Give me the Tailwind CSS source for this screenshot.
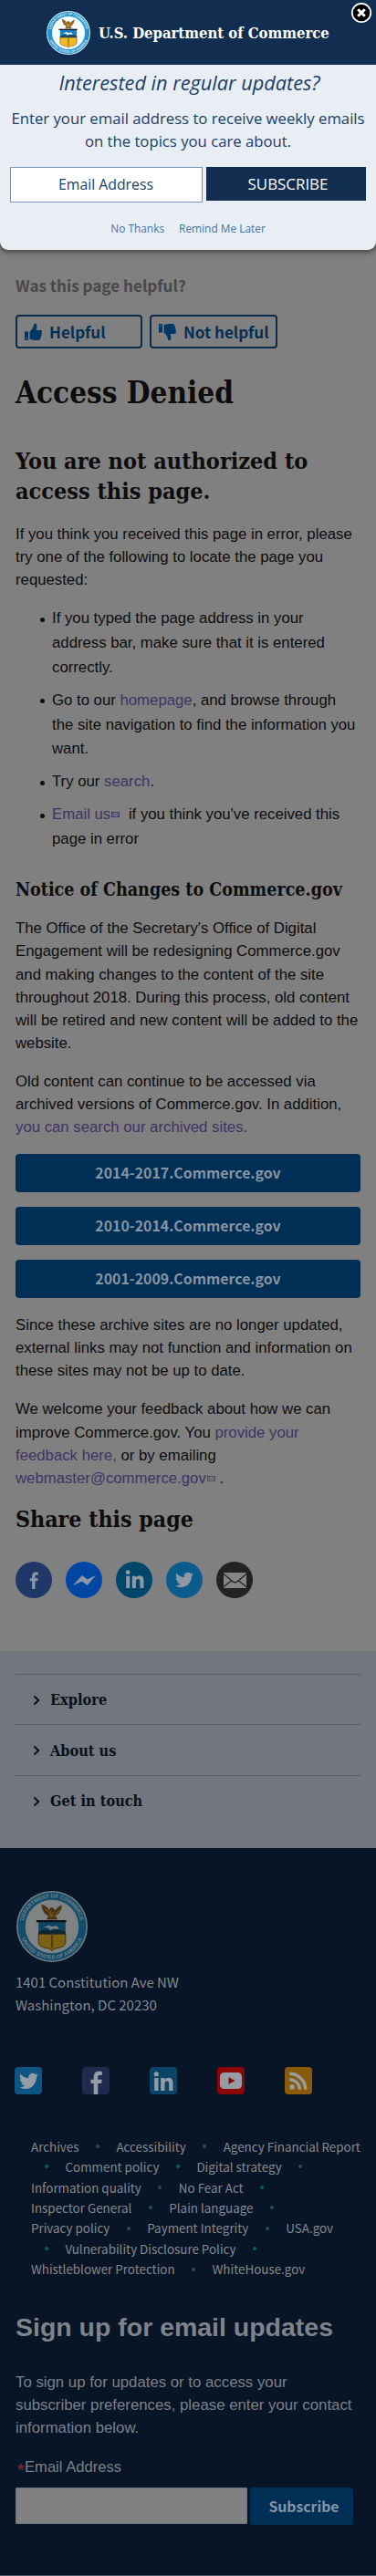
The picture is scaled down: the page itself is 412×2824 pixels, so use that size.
<!DOCTYPE html>
<html lang="en">
<head>
<meta charset="utf-8">
<title>Access Denied | U.S. Department of Commerce</title>
<script src="https://cdn.jsdelivr.net/npm/@tailwindcss/browser@4"></script>
</head>
<body class="w-[412px] bg-[#808080] font-['Liberation_Sans',sans-serif] text-[16.76px] leading-[25.14px] text-[#0d0d0d] whitespace-nowrap overflow-x-hidden">

<svg class="hidden">
  <symbol id="seal" viewBox="0 0 100 100">
    <circle cx="50" cy="50" r="50" fill="#d5edf8"/>
    <circle cx="50" cy="50" r="48" fill="#2593cf"/>
    <circle cx="50" cy="50" r="37.5" fill="#f6fbfd"/>
    <path id="arcTop" d="M9.500 50a40.500 40.500 0 0 1 81 0" fill="none"/>
    <path id="arcBottom" d="M4.500 50a45.500 45.500 0 0 0 91 0" fill="none"/>
    <g fill="#d9f1fb" font-family="Liberation Sans, sans-serif" font-size="7.500" font-weight="bold">
      <text><textPath href="#arcTop" startOffset="50%" text-anchor="middle">DEPARTMENT OF COMMERCE</textPath></text>
      <text><textPath href="#arcBottom" startOffset="50%" text-anchor="middle">UNITED STATES OF AMERICA</textPath></text>
    </g>
    <path d="M35 19c5 1 9 4 11 8l1-3 3-1 3 2 1 3c3-4 6-7 10-8-1 8-4 13-9 15l3 5H42l3-5c-6-2-9-8-10-16z" fill="#8a6220"/>
    <path d="M40 25l7 6 1 6m13-10-6 5-1 5m-6-9 2 9 2-8" stroke="#d19b3d" stroke-width="1.500" fill="none"/>
    <path d="M31 43h38v18H31z" fill="#1b83bf"/>
    <path d="M28 41h42v3H28z" fill="#17202c"/>
    <path d="M31 60h38v12c0 6-8 8-15 9l-4 3-4-3c-7-1-15-3-15-9z" fill="#f0b824" stroke="#6b571a" stroke-width="1.200"/>
    <path d="M31 57l9-3 8 2 10-2 11 3v4H31z" fill="#24475a"/>
    <path d="M38 51l8-3 3 2 8-1 3 5-8-1-5 2-2-3z" fill="#e4f2f6"/>
    <path d="M50 62v18" stroke="#7b6118" stroke-width="2"/>
  </symbol>
  <symbol id="thumb" viewBox="0 0 20 20">
    <path d="M1 9.500h4V19H1z"/>
    <path d="M6.500 9.500C9 8 10.500 5 11 2c.2-1.500 3.500-2 3.500 1.500 0 2-.6 3-1.100 4.500H18c2.500 0 2.600 2.700 1.200 3.400.9.900.7 2.300-.4 2.900.6 1 .1 2.100-.8 2.500.3 1.500-.6 2.200-2 2.200h-4c-2 0-3.500-.8-5.500-1.200z"/>
    <circle cx="3" cy="17" r=".8" fill="#808080"/>
  </symbol>
  <symbol id="bird" viewBox="0 0 24 24">
    <path d="M23.950 4.570a10 10 0 0 1-2.820.77 4.960 4.960 0 0 0 2.160-2.720c-.95.55-2 .95-3.130 1.180a4.920 4.920 0 0 0-8.380 4.480C7.690 8.100 4.070 6.130 1.640 3.160a4.820 4.820 0 0 0-.67 2.480c0 1.710.87 3.210 2.190 4.100a4.900 4.900 0 0 1-2.230-.62v.06a4.920 4.920 0 0 0 3.950 4.830 5 5 0 0 1-2.210.08 4.940 4.940 0 0 0 4.600 3.420A9.870 9.870 0 0 1 0 19.540a13.990 13.990 0 0 0 7.560 2.210c9.050 0 14-7.500 14-13.980 0-.21 0-.42-.02-.63a9.940 9.940 0 0 0 2.410-2.570z"/>
  </symbol>
  <symbol id="fb" viewBox="0 0 12 24">
    <path d="M3 24V13H0V9h3V6.500C3 2.500 5 .7 8.300.7c1.500 0 2.700.1 3.100.2v3.800H9.300C7.500 4.700 7.200 5.500 7.200 6.800V9h4.100l-.6 4H7.200v11z"/>
  </symbol>
  <symbol id="in" viewBox="0 0 24 24">
    <circle cx="3.200" cy="3.200" r="2.900"/>
    <path d="M.8 8h4.900v16H.8zM8.800 8h4.700v2.200c.7-1.200 2.300-2.600 4.800-2.600 5 0 5.700 3.400 5.700 7.600V24h-4.900v-7.800c0-1.900 0-4.200-2.600-4.200s-2.800 2-2.800 4.100V24H8.800z"/>
  </symbol>
  <symbol id="mail" viewBox="0 0 9 6">
    <rect x=".5" y=".5" width="8" height="5" fill="none" stroke="currentColor" stroke-width=".9"/>
    <path d="M.5 1l4 2.500 4-2.500M1 5l2-2m5 2L6 3" fill="none" stroke="currentColor" stroke-width=".8"/>
  </symbol>
  <symbol id="chev" viewBox="0 0 8 12"><path d="M1.500 1.500 6.200 6l-4.700 4.500" fill="none" stroke="currentColor" stroke-width="1.900"/></symbol>
</svg>

<section class="relative h-[274px] rounded-b-[9px] bg-[#e8eef4] font-['Open_Sans',sans-serif] text-[#1b4068] text-center shadow-[0_1px_6px_1px_rgba(0,0,0,0.55)]">
  <header class="h-[71px] bg-[#112e51] flex items-center pl-[51px] gap-[9px]">
    <svg class="size-[48px]"><use href="#seal"/></svg>
    <span class="font-['DejaVu_Serif_Condensed','DejaVu_Serif',serif] font-bold text-[16.54px] text-white leading-6">U.S. Department of Commerce</span>
  </header>
  <svg class="absolute right-[4px] top-[2px] size-6" viewBox="0 0 24 24"><circle cx="12" cy="12" r="10.200" fill="#000" stroke="#fff" stroke-width="1.800"/><path d="M8.200 8.200l7.600 7.600m0-7.600-7.600 7.600" stroke="#fff" stroke-width="3"/></svg>
  <h2 class="pt-[5px] italic text-[21.7px] leading-[30px] pl-[3px]">Interested in regular updates?</h2>
  <p class="mt-[11px] text-[16.72px] leading-[25px]">Enter your email address to receive weekly emails<br>on the topics you care about.</p>
  <div class="mt-4 h-[38px] flex items-start gap-[4px] pl-[11px]">
    <div class="w-[211px] h-[38.500px] bg-white border-[1.5px] border-[#7394bd] text-[15.8px] leading-[36px] pr-[1px]">Email Address</div>
    <div class="w-[175px] h-[37px] bg-[#112e51] text-white text-[16.9px] leading-[37px] pl-1">SUBSCRIBE</div>
  </div>
  <div class="mt-5 flex justify-center gap-4 text-[11.9px] leading-[18px] text-[#4472a8]"><a>No Thanks</a><a>Remind Me Later</a></div>
</section>

<main class="px-[17px] pb-[58px]">
  <div class="pt-[26px] font-['Noto_Sans_CJK_SC',sans-serif] font-bold text-[17.1px] leading-[26px] text-[#484848]">Was this page helpful?</div>
  <div class="mt-[19px] flex gap-[8px] font-['Noto_Sans_CJK_SC',sans-serif] font-bold text-[17.05px] text-[#062f54]">
    <div class="w-[139px] h-[37px] border-2 border-[#0a2b49] rounded-[4px] flex items-center pl-[7px] gap-[8px]"><svg class="w-[20px] h-[20px] fill-[#003767]"><use href="#thumb"/></svg><span class="leading-[33px]">Helpful</span></div>
    <div class="w-[140px] h-[37px] border-2 border-[#0a2b49] rounded-[4px] flex items-center pl-[7px] gap-[8px]"><svg class="w-[20px] h-[20px] fill-[#003767] -scale-y-100"><use href="#thumb"/></svg><span class="leading-[33px]">Not helpful</span></div>
  </div>

  <div class="font-['DejaVu_Serif_Condensed','DejaVu_Serif',serif] font-bold">
    <h1 class="mt-[29px] text-[33px] leading-10">Access Denied</h1>
    <h2 class="mt-[39px] text-[25px] leading-[32.5px]">You are not authorized to<br>access this page.</h2>
  </div>
  <p class="mt-[17.500px]">If you think you received this page in error, please<br>try one of the following to locate the page you<br>requested:</p>
  <ul class="mt-[17.500px] pl-10 leading-[26.820px] flex flex-col gap-[9px]">
    <li class="relative before:absolute before:-left-[13.500px] before:top-[11.500px] before:size-[5px] before:rounded-full before:bg-[#0d0d0d]">If you typed the page address in your<br>address bar, make sure that it is entered<br>correctly.</li>
    <li class="relative before:absolute before:-left-[13.500px] before:top-[11.500px] before:size-[5px] before:rounded-full before:bg-[#0d0d0d]">Go to our <a class="text-[#3c3464]">homepage</a>, and browse through<br>the site navigation to find the information you<br>want.</li>
    <li class="relative before:absolute before:-left-[13.500px] before:top-[11.500px] before:size-[5px] before:rounded-full before:bg-[#0d0d0d]">Try our <a class="text-[#3c3464]">search</a>.</li>
    <li class="relative before:absolute before:-left-[13.500px] before:top-[11.500px] before:size-[5px] before:rounded-full before:bg-[#0d0d0d]"><a class="text-[#3c3464]">Email us<svg class="inline-block w-[9px] h-[6px] ml-[1px] mr-[5px] align-[2px]"><use href="#mail"/></svg></a> if you think you've received this<br>page in error</li>
  </ul>

  <h3 class="mt-[29.600px] font-['DejaVu_Serif_Condensed','DejaVu_Serif',serif] font-bold text-[19.54px] leading-[26px]">Notice of Changes to Commerce.gov</h3>
  <p class="mt-4">The Office of the Secretary's Office of Digital<br>Engagement will be redesigning Commerce.gov<br>and making changes to the content of the site<br>throughout 2018. During this process, old content<br>will be retired and new content will be added to the<br>website.</p>
  <p class="mt-[16.800px]">Old content can continue to be accessed via<br>archived versions of Commerce.gov. In addition,<br><a class="text-[#3c3464]">you can search our archived sites.</a></p>
  <div class="mt-[17px] flex flex-col gap-4 font-['Noto_Sans_CJK_SC',sans-serif] font-bold text-[15.89px] leading-[41px] text-center text-[#8794a3]">
    <a class="h-[42px] rounded-[4px] bg-[#002f55]">2014-2017.Commerce.gov</a>
    <a class="h-[42px] rounded-[4px] bg-[#002f55]">2010-2014.Commerce.gov</a>
    <a class="h-[42px] rounded-[4px] bg-[#002f55]">2001-2009.Commerce.gov</a>
  </div>
  <p class="mt-[16.800px]">Since these archive sites are no longer updated,<br>external links may not function and information on<br>these sites may not be up to date.</p>
  <p class="mt-[16.800px]">We welcome your feedback about how we can<br>improve Commerce.gov. You <a class="text-[#3c3464]">provide your</a><br><a class="text-[#3c3464]">feedback here,</a> or by emailing<br><a class="text-[#3c3464]">webmaster@commerce.gov<svg class="inline-block w-[9px] h-[6px] ml-[1px] align-[2px] text-[#4c4a5c]"><use href="#mail"/></svg></a> .</p>

  <h2 class="mt-[17px] font-['DejaVu_Serif_Condensed','DejaVu_Serif',serif] font-bold text-[24.7px] leading-8">Share this page</h2>
  <div class="mt-[30.400px] flex gap-[15px] text-[#8e98a4] fill-current">
    <div class="size-10 rounded-full bg-[#203868] flex items-center justify-center"><svg class="w-[11px] h-[19px]"><use href="#fb"/></svg></div>
    <div class="size-10 rounded-full bg-[#0047a3] flex items-center justify-center"><svg class="w-[25px] h-[13px]" viewBox="0 0 25 13"><path d="M0 12 10 1l5.500 4.500L25 1 15.500 12 10 7.500z"/></svg></div>
    <div class="size-10 rounded-full bg-[#00456a] flex items-center justify-center"><svg class="w-[21px] h-[20px] mb-[2px]"><use href="#in"/></svg></div>
    <div class="size-10 rounded-full bg-[#0b5c8c] flex items-center justify-center"><svg class="w-[20px] h-[20px]"><use href="#bird"/></svg></div>
    <div class="size-10 rounded-full bg-[#222] flex items-center justify-center"><svg class="w-[25px] h-[17px]" viewBox="0 0 25 17"><rect width="25" height="17" rx="1" fill="#858585"/><path d="M0 1.500l9.500 8q3 2.500 6 0l9.500-8M0 15.500 8.500 9m8 0 8.500 6.500" fill="none" stroke="#222" stroke-width="1.300"/></svg></div>
  </div>
</main>

<nav class="h-[216px] bg-[#72767f] px-[17px] pt-[24.500px] font-['DejaVu_Serif_Condensed','DejaVu_Serif',serif] font-bold text-[16.2px] text-[#090f19]">
  <div class="h-[55.500px] border-t border-[#575b64] flex items-center pl-[19px] pt-[1px] gap-[11px]"><svg class="w-[8px] h-3"><use href="#chev"/></svg><span>Explore</span></div>
  <div class="h-[55.500px] border-t border-[#575b64] flex items-center pl-[19px] pt-[1px] gap-[11px]"><svg class="w-[8px] h-3"><use href="#chev"/></svg><span>About us</span></div>
  <div class="h-[55.500px] border-t border-[#575b64] flex items-center pl-[19px] pt-[1px] gap-[11px]"><svg class="w-[8px] h-3"><use href="#chev"/></svg><span>Get in touch</span></div>
</nav>

<footer class="h-[798px] bg-[#081527] border-b border-[#4c5560] px-[17px] pt-[47px] text-[#84898f]">
  <svg class="size-[78px] ml-[1px] brightness-[0.52]"><use href="#seal"/></svg>
  <p class="mt-[9px] font-['Noto_Sans_CJK_SC',sans-serif] text-[14.96px] leading-[25px]">1401 Constitution Ave NW<br>Washington, DC 20230</p>
  <div class="mt-[56px] -ml-[1px] flex gap-[44px] text-[#949da5] fill-current">
    <div class="size-[30px] rounded-[4px] bg-[#0f5583] flex items-center justify-center"><svg class="size-[21px]"><use href="#bird"/></svg></div>
    <div class="size-[30px] rounded-[4px] bg-[#20294e] flex items-end justify-end pr-[7px]"><svg class="w-[14px] h-[26px]"><use href="#fb"/></svg></div>
    <div class="size-[30px] rounded-[4px] bg-[#0a4466] flex items-center justify-center"><svg class="w-[22px] h-[21px]"><use href="#in"/></svg></div>
    <div class="size-[30px] rounded-[4px] bg-[#8c0508] flex items-center justify-center"><svg class="w-[24px] h-[18px]" viewBox="0 0 24 18"><rect width="24" height="18" rx="4.500"/><path d="M9.500 5l7 4-7 4z" fill="#8c0508"/></svg></div>
    <div class="size-[30px] rounded-[4px] bg-[#8a5a0b] flex items-center justify-center"><svg class="size-[20px]" viewBox="0 0 20 20"><circle cx="3" cy="17" r="2.700"/><path d="M.3 8.600A11.200 11.200 0 0 1 11.400 19.700M.3 2.200A17.600 17.600 0 0 1 17.800 19.700" fill="none" stroke="currentColor" stroke-width="3.400"/></svg></div>
  </div>

  <div class="mt-[45.500px] pl-[17px] font-['Noto_Sans_CJK_SC',sans-serif] text-[13.4px] leading-[22.4px]">
    <div class="flex items-center"><a>Archives</a><i class="size-[4px] rounded-full bg-[#24505a] mx-[18.500px]"></i><a>Accessibility</a><i class="size-[4px] rounded-full bg-[#24505a] mx-[18.500px]"></i><a>Agency Financial Report</a></div>
    <div class="flex items-center"><i class="size-[4px] rounded-full bg-[#0b5f58] ml-[15px] mr-[18.500px]"></i><a>Comment policy</a><i class="size-[4px] rounded-full bg-[#0b5f58] mx-[18.500px]"></i><a>Digital strategy</a><i class="size-[4px] rounded-full bg-[#24505a] mx-[18.500px]"></i></div>
    <div class="flex items-center"><a>Information quality</a><i class="size-[4px] rounded-full bg-[#1c505a] mx-[18.500px]"></i><a>No Fear Act</a><i class="size-[4px] rounded-full bg-[#0b5f58] mx-[18.500px]"></i></div>
    <div class="flex items-center"><a>Inspector General</a><i class="size-[4px] rounded-full bg-[#24505a] mx-[18.500px]"></i><a>Plain language</a><i class="size-[4px] rounded-full bg-[#24505a] mx-[18.500px]"></i></div>
    <div class="flex items-center"><a>Privacy policy</a><i class="size-[4px] rounded-full bg-[#24505a] mx-[18.500px]"></i><a>Payment Integrity</a><i class="size-[4px] rounded-full bg-[#24505a] mx-[18.500px]"></i><a>USA.gov</a></div>
    <div class="flex items-center"><i class="size-[4px] rounded-full bg-[#0b5f58] ml-[15px] mr-[18.500px]"></i><a>Vulnerability Disclosure Policy</a><i class="size-[4px] rounded-full bg-[#0b5f58] mx-[18.500px]"></i></div>
    <div class="flex items-center"><a>Whistleblower Protection</a><i class="size-[4px] rounded-full bg-[#24505a] mx-[18.500px]"></i><a>WhiteHouse.gov</a></div>
  </div>

  <h2 class="mt-[34.500px] font-bold text-[28.47px] leading-9 text-[#7f838b]">Sign up for email updates</h2>
  <p class="mt-[30px] text-[16.8px] text-[#7c8087]">To sign up for updates or to access your<br>subscriber preferences, please enter your contact<br>information below.</p>
  <div class="mt-[18.600px] pl-[2px] text-[16.6px] leading-6 text-[#7c8087] flex"><span class="w-[8px] text-[19px] leading-[30px] h-6 font-bold text-[#742030]">*</span><span>Email Address</span></div>
  <div class="mt-[10px] flex gap-[3px]">
    <div class="w-[254px] h-[40px] bg-[#808080] border border-[#70757b] rounded-[1px]"></div>
    <div class="w-[113px] h-[41px] bg-[#002f55] rounded-[3px] text-center font-['Noto_Sans_CJK_SC',sans-serif] font-bold text-[15.76px] leading-[41px] pl-[5px] text-[#8794a3]">Subscribe</div>
  </div>
</footer>
</body>
</html>
